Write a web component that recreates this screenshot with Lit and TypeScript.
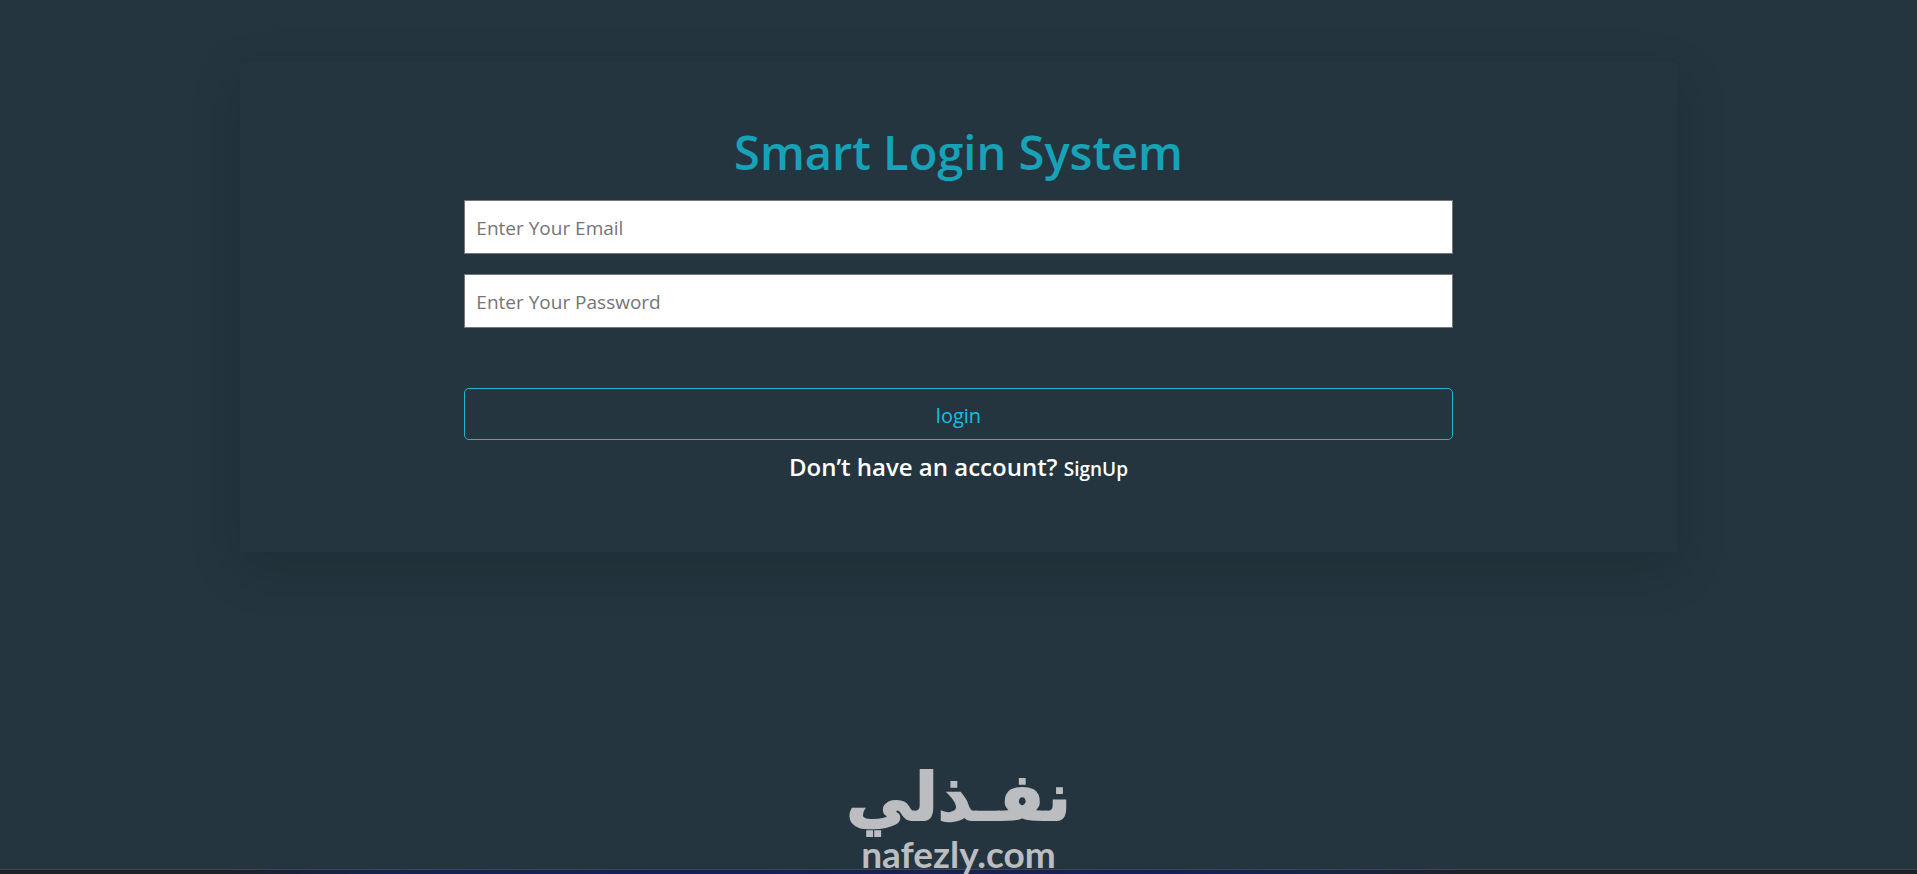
import { LitElement, html, css } from "lit";
import { customElement } from "lit/decorators.js";

@customElement("login-card")
class LoginCard extends LitElement {
  static styles = css`
    :host {
      display: block;
      box-sizing: border-box;
      width: 75%;
      padding: 60px;
      box-shadow: 0 16px 48px rgba(0, 0, 0, 0.15);
    }
    .form {
      display: flex;
      flex-direction: column;
      width: 75%;
      margin: 0 auto;
    }
    .title {
      margin: 0 0 18px;
      color: #17a2b8;
      font-size: 47px;
      line-height: 60px;
      font-weight: 600;
      text-align: center;
    }
    .field {
      box-sizing: border-box;
      width: 100%;
      height: 54px;
      margin: 0 0 20px;
      padding: 2px 11px 0;
      border: 1px solid #767676;
      border-radius: 0;
      background: #fff;
      color: #212529;
      font: inherit;
      font-size: 19px;
    }
    .field::placeholder {
      color: #757575;
      opacity: 1;
    }
    .submit {
      height: 52px;
      margin: 40px 0 12px;
      padding: 2px 11px 0;
      border: 1px solid #25b4cf;
      border-radius: 5px;
      background: transparent;
      color: #16bfe2;
      font: inherit;
      font-size: 20px;
      cursor: pointer;
    }
    .signup {
      margin: 0 0 8px;
      color: #fff;
      font-size: 24px;
      line-height: 30px;
      font-weight: 600;
      text-align: center;
    }
    .link {
      color: #fff;
      font-size: 19px;
      text-decoration: none;
    }
  `;

  render() {
    return html`
      <form class="form" @submit=${(e: Event) => e.preventDefault()}>
        <h1 class="title">Smart Login System</h1>
        <input class="field" type="email" aria-label="Email" placeholder="Enter Your Email" />
        <input class="field" type="password" aria-label="Password" placeholder="Enter Your Password" />
        <button class="submit" type="submit">login</button>
        <p class="signup">Don’t have an account? <a class="link" href="#signup">SignUp</a></p>
      </form>
    `;
  }
}

@customElement("app-root")
class AppRoot extends LitElement {
  static styles = css`
    :host {
      position: relative;
      display: flex;
      flex-direction: column;
      min-height: 100vh;
      background: #24353f;
      font-family: "Open Sans", "Noto Sans", sans-serif;
    }
    .page {
      flex: 1;
      display: flex;
      flex-direction: column;
      align-items: center;
      padding-top: 62px;
    }
    .strip {
      height: 4px;
      border-top: 1px solid #3b4853;
      background: linear-gradient(90deg, #20202b 0%, #20202b 12%, #17234f 20%, #151d5c 36%, #1a2052 50%, #151d5c 60%, #18244a 68%, #20202b 76%, #20202b 100%);
    }
    .brand {
      position: absolute;
      left: 0;
      right: 0;
      bottom: 0;
      display: flex;
      flex-direction: column;
      align-items: center;
      color: #bbbdc1;
      pointer-events: none;
    }
    .arabic {
      font-family: "DejaVu Sans", sans-serif;
      font-size: 66px;
      line-height: 72px;
      font-weight: 700;
      -webkit-text-stroke: 2px #bbbdc1;
    }
    .latin {
      font-family: Lato, sans-serif;
      font-size: 37px;
      line-height: 40px;
      font-weight: 700;
    }
  `;

  render() {
    return html`
      <main class="page"><login-card></login-card></main>
      <div class="strip"></div>
      <div class="brand">
        <span class="arabic" lang="ar" dir="rtl">نفـذلي</span>
        <span class="latin">nafezly.com</span>
      </div>
    `;
  }
}
